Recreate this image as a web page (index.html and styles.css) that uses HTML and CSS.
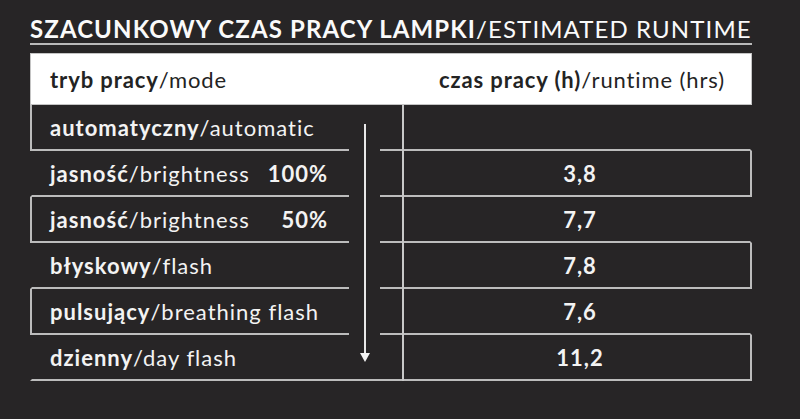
FILE: index.html
```html
<!DOCTYPE html>
<html lang="pl">
<head>
<meta charset="utf-8">
<title>Szacunkowy czas pracy lampki</title>
<link rel="stylesheet" href="styles.css">
</head>
<body>
<div class="page">
  <h1 class="title"><b>SZACUNKOWY CZAS PRACY LAMPKI</b>/ESTIMATED RUNTIME</h1>
  <div class="table">
    <div class="head">
      <div class="hcell"><span><b>tryb pracy</b>/mode</span></div>
      <div class="hgap"></div>
      <div class="hcell num"><span><b>czas pracy (h)</b>/runtime (hrs)</span></div>
    </div>
    <div class="body">
      <div class="row">
        <div class="mode boxed"><span><b>automatyczny</b>/automatic</span></div>
        <div class="gap"></div>
        <div class="time"></div>
      </div>
      <div class="row">
        <div class="mode"><span><b>jasność</b>/brightness</span><b class="pct">100%</b></div>
        <div class="gap"></div>
        <div class="time boxed">3,8</div>
      </div>
      <div class="row">
        <div class="mode boxed"><span><b>jasność</b>/brightness</span><b class="pct">50%</b></div>
        <div class="gap"></div>
        <div class="time">7,7</div>
      </div>
      <div class="row">
        <div class="mode"><span><b>błyskowy</b>/flash</span></div>
        <div class="gap"></div>
        <div class="time boxed">7,8</div>
      </div>
      <div class="row">
        <div class="mode boxed"><span><b>pulsujący</b>/breathing flash</span></div>
        <div class="gap"></div>
        <div class="time">7,6</div>
      </div>
      <div class="row last">
        <div class="mode"><span><b>dzienny</b>/day flash</span></div>
        <div class="gap"></div>
        <div class="time boxed">11,2</div>
      </div>
      <div class="vline"></div>
      <div class="arrow"></div>
    </div>
  </div>
</div>
</body>
</html>
```
FILE: styles.css
```css
html, body {
  margin: 0;
  padding: 0;
  background: #272526;
}
body {
  width: 800px;
  height: 419px;
  overflow: hidden;
  font-family: Lato, "Liberation Sans", sans-serif;
  color: #f3f3f3;
}
b { font-weight: 700; }
.page {
  padding: 15px 0 0 30px;
}
.title {
  display: inline-block;
  margin: 0;
  font-size: 24px;
  line-height: 28px;
  letter-spacing: 1.1px;
  font-weight: 400;
  color: #fafafa;
  border-bottom: 2px solid #b9b9b9;
  white-space: nowrap;
}
.table {
  margin-top: 8px;
  width: 722px;
}
.head {
  display: grid;
  grid-template-columns: 319px 31px 372px;
  height: 52px;
  background: #fff;
  box-sizing: border-box;
  border: 1px solid #c4c4c4;
  color: #232323;
  font-size: 22px;
  letter-spacing: 0.9px;
}
.hcell {
  display: flex;
  align-items: center;
  padding-left: 19px;
  white-space: nowrap;
}
.hcell.num {
  padding-left: 30px;
  justify-content: center;
}
.body {
  position: relative;
}
.row {
  display: grid;
  grid-template-columns: 319px 31px 372px;
  height: 46px;
  font-size: 22px;
  letter-spacing: 1px;
}
.mode, .time {
  box-sizing: border-box;
  display: flex;
  align-items: center;
  border-bottom: 2px solid #bcbcbc;
  white-space: nowrap;
}
.mode {
  padding-left: 18px;
  padding-right: 21px;
  border-left: 2px solid transparent;
  justify-content: space-between;
}
.mode.boxed {
  border-left-color: #bcbcbc;
}
.time {
  justify-content: center;
  padding-left: 30px;
  font-weight: 700;
  border-right: 2px solid transparent;
}
.time.boxed {
  border-right-color: #bcbcbc;
}
.row.last .gap {
  border-bottom: 2px solid #bcbcbc;
}
.pct {
  font-weight: 700;
}
.vline {
  position: absolute;
  left: 372px;
  top: 0;
  bottom: 0;
  width: 2px;
  background: #c8c8c8;
}
.arrow {
  position: absolute;
  left: 334px;
  top: 19px;
  width: 2px;
  height: 230px;
  background: #e8e8e8;
}
.arrow::after {
  content: "";
  position: absolute;
  left: -4px;
  bottom: -8px;
  width: 0;
  height: 0;
  border-left: 5px solid transparent;
  border-right: 5px solid transparent;
  border-top: 9px solid #f3f3f3;
}
```
